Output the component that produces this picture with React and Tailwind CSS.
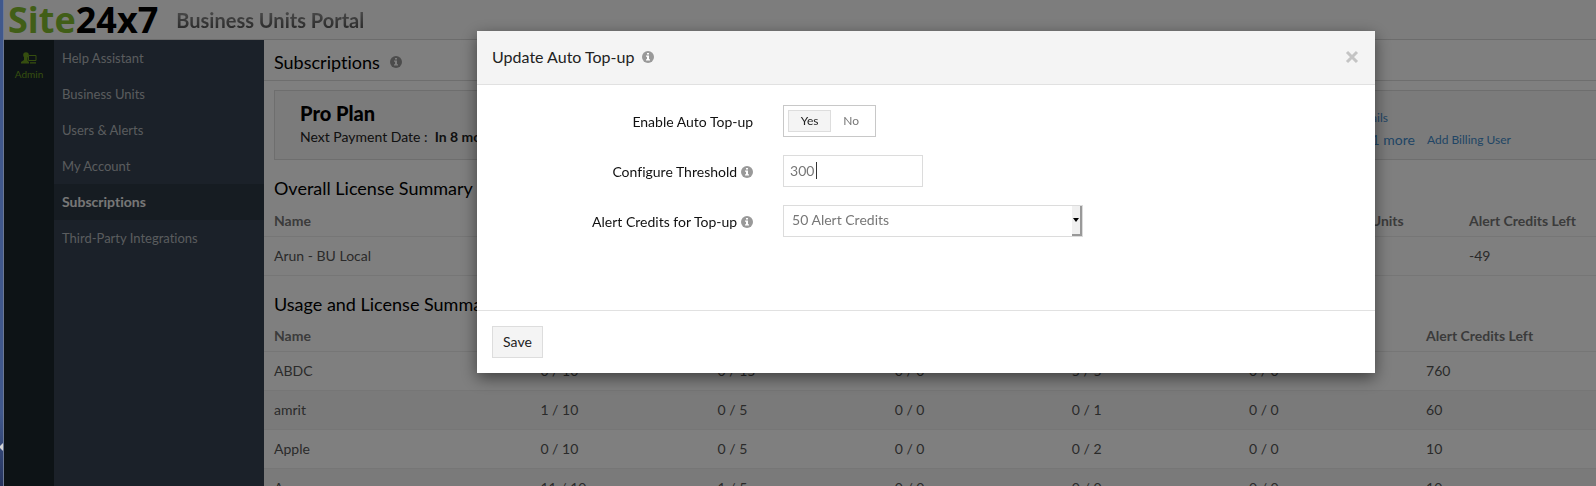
const menuItems = [
  "Help Assistant",
  "Business Units",
  "Users & Alerts",
  "My Account",
  "Subscriptions",
  "Third-Party Integrations",
];

const usageRows = [
  { name: "ABDC", usage: ["0 / 10", "0 / 15", "0 / 0", "5 / 5", "0 / 0"], credits: "760" },
  { name: "amrit", usage: ["1 / 10", "0 / 5", "0 / 0", "0 / 1", "0 / 0"], credits: "60" },
  { name: "Apple", usage: ["0 / 10", "0 / 5", "0 / 0", "0 / 2", "0 / 0"], credits: "10" },
  { name: "Arun", usage: ["11 / 10", "1 / 5", "0 / 0", "0 / 0", "0 / 0"], credits: "10" },
];

function InfoIcon() {
  return (
    <svg width="12" height="12" viewBox="0 0 12 12" className="shrink-0" aria-hidden="true">
      <circle cx="6" cy="6" r="6" fill="#999" />
      <path d="M5 2h2v1.6H5zM4 4.6h3v3.6h1v1.2H4V8.2h1V5.8H4z" fill="#fff" />
    </svg>
  );
}

function AdminIcon() {
  return (
    <svg width="16" height="12" viewBox="0 0 16 12" aria-hidden="true">
      <circle cx="5" cy="3" r="2.800" fill="#6a9c1e" />
      <path d="M3 4h3.500v4.500L8 10v1.500H0V10l3-2z" fill="#6a9c1e" />
      <path d="M7.500 3.500h7.500v5H7.500z" fill="#1a262c" stroke="#6a9c1e" />
      <path d="M9 10.200h6v1.300H9z" fill="#6a9c1e" />
    </svg>
  );
}

function Header() {
  return (
    <header className="flex h-10 items-center gap-[18px] border-b border-[#d8d8d8] bg-[#fafafa] pl-1">
      <div className="font-['Open_Sans'] text-[36px] leading-10 font-bold text-black">
        <span className="text-[#82bc2e]">Site</span>24x7
      </div>
      <h1 className="bg-linear-to-b from-[#aaa] to-[#444] bg-clip-text text-xl font-bold text-transparent">
        Business Units Portal
      </h1>
    </header>
  );
}

function Sidebar() {
  return (
    <div className="flex shrink-0">
      <div className="w-[50px] bg-[#1a262c] pt-3">
        <a href="#admin" className="flex flex-col items-center gap-[2px] text-[10px] leading-4 text-[#6a9c1e]">
          <AdminIcon />
          Admin
        </a>
      </div>
      <nav className="w-[210px] bg-[#364352]">
        {menuItems.map((item) => (
          <a
            key={item}
            href="#menu"
            className={
              item === "Subscriptions"
                ? "block bg-[#2c3845] px-2 text-sm leading-9 font-bold text-[#eee]"
                : "block px-2 text-[13px] leading-9 text-[#b4b8bc]"
            }
          >
            {item}
          </a>
        ))}
      </nav>
    </div>
  );
}

function PlanBox() {
  return (
    <section className="mt-[9px] ml-[10px] flex h-[70px] items-center justify-between border border-r-0 border-[#dcdcdc] bg-[#f7f7f7] pr-[85px] pl-[25px]">
      <div>
        <h3 className="text-xl leading-6 font-black text-black">Pro Plan</h3>
        <p className="text-sm leading-6 text-[#222]">
          Next Payment Date : &nbsp;<b>In 8 months</b>
        </p>
      </div>
      <div className="pt-2 text-[#428bca]">
        <p className="pr-[123px] text-right text-xs leading-[22px]">
          <a href="#details">View Details</a>
        </p>
        <p className="flex items-center gap-3 text-sm leading-[22px]">
          <a href="#more">admin@site24x7.com + 1 more</a>
          <a href="#add" className="text-xs leading-[22px]">Add Billing User</a>
        </p>
      </div>
    </section>
  );
}

function LicenseTable() {
  return (
    <table className="w-full table-fixed text-left text-sm text-[#555]">
      <thead>
        <tr className="h-8 border-b border-[#ececec] text-[#777]">
          <th className="w-[26%] pt-[2px] pl-[10px]">Name</th>
          <th className="w-[26%] pt-[2px] pl-[10px]">Monitors</th>
          <th className="w-[26%] pt-[2px] pl-[10px]">Advanced Monitors</th>
          <th className="pt-[2px] pl-[10px]">Business Units</th>
          <th className="w-[137px] pt-[2px] pl-[10px]">Alert Credits Left</th>
        </tr>
      </thead>
      <tbody>
        <tr className="h-[39px] border-b border-[#ececec]">
          <td className="pl-[10px]">Arun - BU Local</td>
          <td className="pl-[10px]">10</td>
          <td className="pl-[10px]">5</td>
          <td className="pl-[10px]">4</td>
          <td className="pl-[10px]">-49</td>
        </tr>
      </tbody>
    </table>
  );
}

function UsageTable() {
  return (
    <table className="w-full table-fixed text-left text-sm text-[#555]">
      <thead>
        <tr className="h-8 border-b border-[#ececec] text-[#777]">
          <th className="w-[20%] pt-[2px] pl-[10px]">Name</th>
          <th className="w-[13.3%] pt-[2px] pl-[10px]">Basic Monitors</th>
          <th className="w-[13.3%] pt-[2px] pl-[10px]">Advanced</th>
          <th className="w-[13.3%] pt-[2px] pl-[10px]">Probes</th>
          <th className="w-[13.3%] pt-[2px] pl-[10px]">Network</th>
          <th className="w-[13.3%] pt-[2px] pl-[10px]">RUM</th>
          <th className="pt-[2px] pl-[10px]">Alert Credits Left</th>
        </tr>
      </thead>
      <tbody>
        {usageRows.map((row) => (
          <tr key={row.name} className="h-[39px] border-b border-[#ececec] even:bg-[#f5f5f5]">
            <td className="pl-[10px]">{row.name}</td>
            {row.usage.map((value, i) => (
              <td key={i} className="pl-[10px]">{value}</td>
            ))}
            <td className="pl-[10px]">{row.credits}</td>
          </tr>
        ))}
      </tbody>
    </table>
  );
}

function TopUpModal() {
  return (
    <div className="fixed inset-0 flex items-start justify-center bg-black/50 pt-[31px] pl-[256px]">
      <div
        role="dialog"
        aria-label="Update Auto Top-up"
        className="w-[67%] bg-white shadow-[0_5px_15px_rgba(0,0,0,0.5)]"
      >
        <div className="flex h-[54px] items-center gap-2 border-b border-[#e1e1e1] bg-[#f4f4f4] px-[15px] pb-[2px]">
          <h2 className="text-base text-[#222]">Update Auto Top-up</h2>
          <InfoIcon />
          <button aria-label="Close" className="ml-auto">
            <svg width="16" height="16" viewBox="0 0 16 16">
              <path d="M3 3l10 10M13 3L3 13" stroke="#c4c4c4" strokeWidth="3" />
            </svg>
          </button>
        </div>

        <form className="grid auto-rows-[32px] grid-cols-[276px_1fr] gap-x-[30px] gap-y-[18px] pt-5 pb-[73px] text-sm text-[#111]">
          <span id="enable-label" className="flex items-center justify-end pt-[2px]">Enable Auto Top-up</span>
          <div
            role="radiogroup"
            aria-labelledby="enable-label"
            className="flex h-8 w-[93px] items-center border border-[#c8c8c8] px-1 text-xs text-[#777]"
          >
            <label className="flex h-[22px] w-[43px] items-center justify-center border border-transparent has-checked:border-[#ddd] has-checked:bg-[#f4f4f4] has-checked:text-[#222]">
              <input type="radio" name="enable" defaultChecked className="sr-only" />
              Yes
            </label>
            <label className="flex h-[22px] w-10 items-center justify-center border border-transparent has-checked:border-[#ddd] has-checked:bg-[#f4f4f4] has-checked:text-[#222]">
              <input type="radio" name="enable" className="sr-only" />
              No
            </label>
          </div>

          <label htmlFor="threshold" className="flex items-center justify-end gap-1 pt-[2px]">
            Configure Threshold <InfoIcon />
          </label>
          <div className="relative w-[140px]">
            <input
              id="threshold"
              type="text"
              defaultValue="300"
              className="h-8 w-full border border-[#dcdcdc] px-[6px] pb-[2px] text-sm text-[#777] caret-transparent outline-none"
            />
            <span className="absolute top-[7px] left-[33px] h-[17px] w-px bg-[#333]" />
          </div>

          <label htmlFor="credits" className="flex items-center justify-end gap-1 pt-[2px]">
            Alert Credits for Top-up <InfoIcon />
          </label>
          <div className="relative w-[300px]">
            <select
              id="credits"
              className="h-8 w-full appearance-none border border-[#dcdcdc] bg-white px-2 pb-[2px] text-sm text-[#777] outline-none"
            >
              <option>50 Alert Credits</option>
              <option>100 Alert Credits</option>
            </select>
            <span className="pointer-events-none absolute top-px right-px flex h-[30px] w-[10px] items-center justify-center border-r-2 border-b-2 border-[#999] bg-[#f0f0f0]">
              <svg width="6" height="4" viewBox="0 0 6 4">
                <path d="M0 0h6L3 4z" fill="#000" />
              </svg>
            </span>
          </div>
        </form>

        <div className="border-t border-[#e1e1e1] p-[15px]">
          <button className="h-8 border border-[#ddd] bg-[#f4f4f4] px-[10px] text-sm text-[#222]">Save</button>
        </div>
      </div>
    </div>
  );
}

export default function App() {
  return (
    <div className="flex h-screen overflow-hidden bg-white font-['Lato',sans-serif] [font-variant-ligatures:none]">
      <div className="relative z-10 w-1 shrink-0 border-r border-[#6b7894] bg-linear-to-b from-[#40588c] from-85% to-[#26345e]">
        <svg width="3" height="8" viewBox="0 0 3 8" className="absolute top-[443px] left-0">
          <path d="M3 0v8L0 5V3z" fill="#d4d4d4" />
        </svg>
      </div>
      <div className="flex min-w-0 grow flex-col">
        <Header />
        <div className="flex grow">
          <Sidebar />
          <main className="min-w-0 grow">
            <div className="flex h-[41px] items-center gap-[10px] border-b border-[#dcdcdc] pt-1 pl-[10px]">
              <h2 className="text-lg leading-6 text-black">Subscriptions</h2>
              <InfoIcon />
            </div>
            <PlanBox />
            <h3 className="mt-4 mb-1 pl-[10px] text-lg leading-6 text-black">Overall License Summary</h3>
            <LicenseTable />
            <h3 className="mt-4 mb-1 pl-[10px] text-lg leading-6 text-black">Usage and License Summary</h3>
            <UsageTable />
          </main>
        </div>
      </div>
      <TopUpModal />
    </div>
  );
}
